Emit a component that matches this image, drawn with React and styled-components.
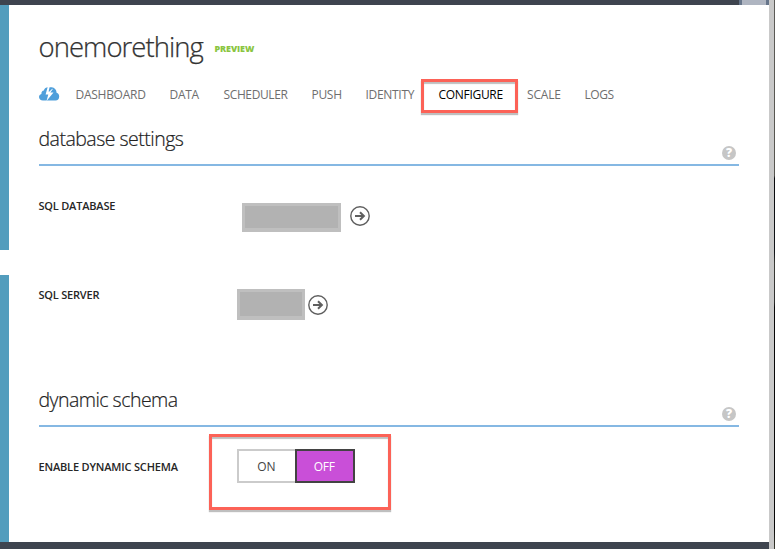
import React from "react";
import styled, { createGlobalStyle } from "styled-components";

const Global = createGlobalStyle`
  *, *::before, *::after { box-sizing: border-box; }
  body { margin: 0; background: #fff; overflow: hidden; }
  #root { font-family: "Open Sans", "Noto Sans", sans-serif; }
  h1, h2, p { margin: 0; }
`;

const Screen = styled.div`
  display: grid;
  grid-template-columns: 769px 5px 1px;
  width: 775px;
  height: 549px;
`;
const Window = styled.div`
  display: grid;
  grid-template-rows: 5px 537px 7px;
  background: #fff;
`;
const Bar = styled.div`
  display: flex;
  justify-content: flex-end;
  background: #3e444f;
`;
const Tab = styled.div`
  width: 30px;
  height: 5px;
  background: #afb5c1;
  border: solid #66758a;
  border-width: 0 3px;
`;
const Scroller = styled.div`
  background: #c9c9c9;
`;
const Desktop = styled.div`
  background: linear-gradient(#5c5b57 0, #55544e 32%, #08090b 32.5%, #101418 46%, #3a3b36 48%, #2c2d2c 55%, #060606 56%, #060606 96%, #3c3d31);
`;
const Body = styled.div`
  display: grid;
  grid-template-columns: 9px 1fr;
`;
const Rail = styled.div`
  display: grid;
  grid-template-rows: 245px 267px;
  row-gap: 25px;
`;
const RailPart = styled.div`
  background: #539dbd;
`;
const Main = styled.main`
  padding: 0 30px;
  display: flex;
  flex-direction: column;
`;
const Header = styled.header`
  display: flex;
  height: 74px;
  padding-top: 23px;
`;
const Title = styled.h1`
  width: 176px;
  margin-left: -0.5px;
  font-size: 27.5px;
  font-weight: 300;
  line-height: 38px;
  letter-spacing: -0.97px;
  color: #333;
  -webkit-text-stroke: 0.25px #333;
  white-space: nowrap;
`;
const Preview = styled.span`
  font-size: 9px;
  font-weight: 800;
  line-height: 12px;
  padding-top: 15px;
  letter-spacing: -0.1px;
  color: #8ac541;
`;
const Nav = styled.nav`
  display: flex;
  height: 32px;
`;
const NavIcon = styled.div`
  width: 36.5px;
  padding-top: 8px;
  svg { display: block; }
`;
const NavItem = styled.a`
  position: relative;
  flex: none;
  width: ${(p) => p.$w}px;
  font-size: 12px;
  line-height: 32px;
  letter-spacing: ${(p) => p.$track}px;
  color: ${(p) => (p.$active ? "#000" : "#6e6e6e")};
  white-space: nowrap;
`;
const Callout = styled.div`
  position: absolute;
  left: ${(p) => p.$x}px;
  top: ${(p) => p.$y}px;
  width: ${(p) => p.$w}px;
  height: ${(p) => p.$h}px;
  border: 3px solid #fc6257;
  box-shadow: 0 2px 1px rgba(0, 0, 0, 0.25), inset 0 2px 1px rgba(0, 0, 0, 0.25);
`;
const SectionHead = styled.div`
  display: flex;
  justify-content: space-between;
  width: 700px;
  height: 41px;
  margin-top: ${(p) => p.$mt || 0}px;
  border-bottom: 2px solid #85b8e3;
  padding-right: 3px;
`;
const Heading = styled.h2`
  margin-left: -0.5px;
  font-size: 19.5px;
  font-weight: 300;
  line-height: 27px;
  letter-spacing: ${(p) => p.$track}px;
  color: #222;
  -webkit-text-stroke: 0.2px #222;
`;
const Help = styled.div`
  width: 14px;
  height: 14px;
  margin-top: 21px;
  border-radius: 50%;
  background: #c6c6c6;
  color: #fff;
  font-size: 12px;
  font-weight: 800;
  line-height: 14px;
  text-align: center;
`;
const Row = styled.div`
  position: relative;
  display: flex;
  height: ${(p) => p.$h}px;
`;
const Label = styled.div`
  width: ${(p) => p.$w}px;
  font-size: 11px;
  font-weight: 600;
  line-height: 16px;
  padding-top: ${(p) => p.$pt}px;
  text-indent: -0.5px;
  letter-spacing: ${(p) => p.$track}px;
  color: #262626;
  white-space: nowrap;
`;
const Redacted = styled.div`
  width: ${(p) => p.$w}px;
  height: ${(p) => p.$h}px;
  margin-top: ${(p) => p.$mt}px;
  background: #b2b2b2;
  border: 3px solid #bfbfbf;
  border-bottom-width: 4px;
`;
const Go = styled.div`
  margin: ${(p) => p.$mt}px 0 0 ${(p) => p.$ml}px;
  svg { display: block; }
`;
const Toggle = styled.div`
  display: flex;
  height: 34px;
  margin-top: 22px;
`;
const Option = styled.div`
  width: ${(p) => (p.$on ? 60 : 58)}px;
  border: 2px solid ${(p) => (p.$on ? "#434343" : "#cbcbcb")};
  border-right-width: ${(p) => (p.$on ? 2 : 0)}px;
  padding-right: 1.5px;
  background: ${(p) => (p.$on ? "#c94fd8" : "#fff")};
  color: ${(p) => (p.$on ? "#fff" : "#444")};
  font-size: 12px;
  line-height: 31px;
  letter-spacing: -0.3px;
  text-align: center;
`;

const Cloud = () => (
  <svg width="21" height="14" viewBox="0 0 21 14">
    <path
      fill="#4f9fdb"
      d="M4 13.500C1.500 13.500 0 12 0 10.100c0-1.700 1-2.900 2.400-3.200C2.300 5 3.400 3.700 4.800 3.500 5.600 1.500 7 .3 9.200.3h3.600c2.600.2 4.700 2.400 4.800 5.500 1.600.5 2.600 1.900 2.600 3.700 0 2.400-1.500 4-3.600 4z"
    />
    <path fill="#fff" d="M8.700 0 6.600 7.400h2.700L7.500 14l7-8.400h-3.200L14 1.800 13 2 10.200 4.800 9.600 4.600 10.600 0z" />
  </svg>
);
const Arrow = () => (
  <svg width="20" height="20" viewBox="0 0 20 20" fill="none" stroke="#5f5f5f">
    <circle cx="10" cy="10" r="9.200" strokeWidth="1.400" />
    <path d="M5 10h9" strokeWidth="2" />
    <path d="M10 6.200 13.900 10l-3.900 3.800" strokeWidth="2" />
  </svg>
);

const items = [
  ["DASHBOARD", 94, -0.27],
  ["DATA", 54, -0.3],
  ["SCHEDULER", 88, -0.38],
  ["PUSH", 54, -0.3],
  ["IDENTITY", 73, -0.3],
  ["CONFIGURE", 88.5, -0.3],
  ["SCALE", 57.5, -0.2],
  ["LOGS", 40, -0.4],
];

export default function App() {
  return (
    <>
      <Global />
      <Screen>
        <Window>
          <Bar><Tab /></Bar>
          <Body>
            <Rail><RailPart /><RailPart /></Rail>
            <Main>
              <Header>
                <Title>onemorething</Title>
                <Preview>PREVIEW</Preview>
              </Header>
              <Nav>
                <NavIcon><Cloud /></NavIcon>
                {items.map(([name, w, track]) => (
                  <NavItem key={name} $w={w} $track={track} $active={name === "CONFIGURE"}>
                    {name}
                    {name === "CONFIGURE" && <Callout $x={-17.5} $y={0} $w={97} $h={34} />}
                  </NavItem>
                ))}
              </Nav>
              <SectionHead $mt={14}>
                <Heading $track={-0.51}>database settings</Heading>
                <Help>?</Help>
              </SectionHead>
              <Row $h={89}>
                <Label $w={203} $pt={32} $track={-0.2}>SQL DATABASE</Label>
                <Redacted $w={99} $h={29} $mt={37} />
                <Go $mt={40} $ml={9}><Arrow /></Go>
              </Row>
              <Row $h={131}>
                <Label $w={198} $pt={32} $track={-0.2}>SQL SERVER</Label>
                <Redacted $w={68} $h={31} $mt={34} />
                <Go $mt={40} $ml={3}><Arrow /></Go>
              </Row>
              <SectionHead>
                <Heading $track={-0.53}>dynamic schema</Heading>
                <Help>?</Help>
              </SectionHead>
              <Row $h={110}>
                <Label $w={198} $pt={32} $track={-0.17}>ENABLE DYNAMIC SCHEMA</Label>
                <Toggle>
                  <Option>ON</Option>
                  <Option $on>OFF</Option>
                </Toggle>
                <Callout $x={170} $y={7} $w={182} $h={76} />
              </Row>
            </Main>
          </Body>
          <Bar />
        </Window>
        <Scroller />
        <Desktop />
      </Screen>
    </>
  );
}
